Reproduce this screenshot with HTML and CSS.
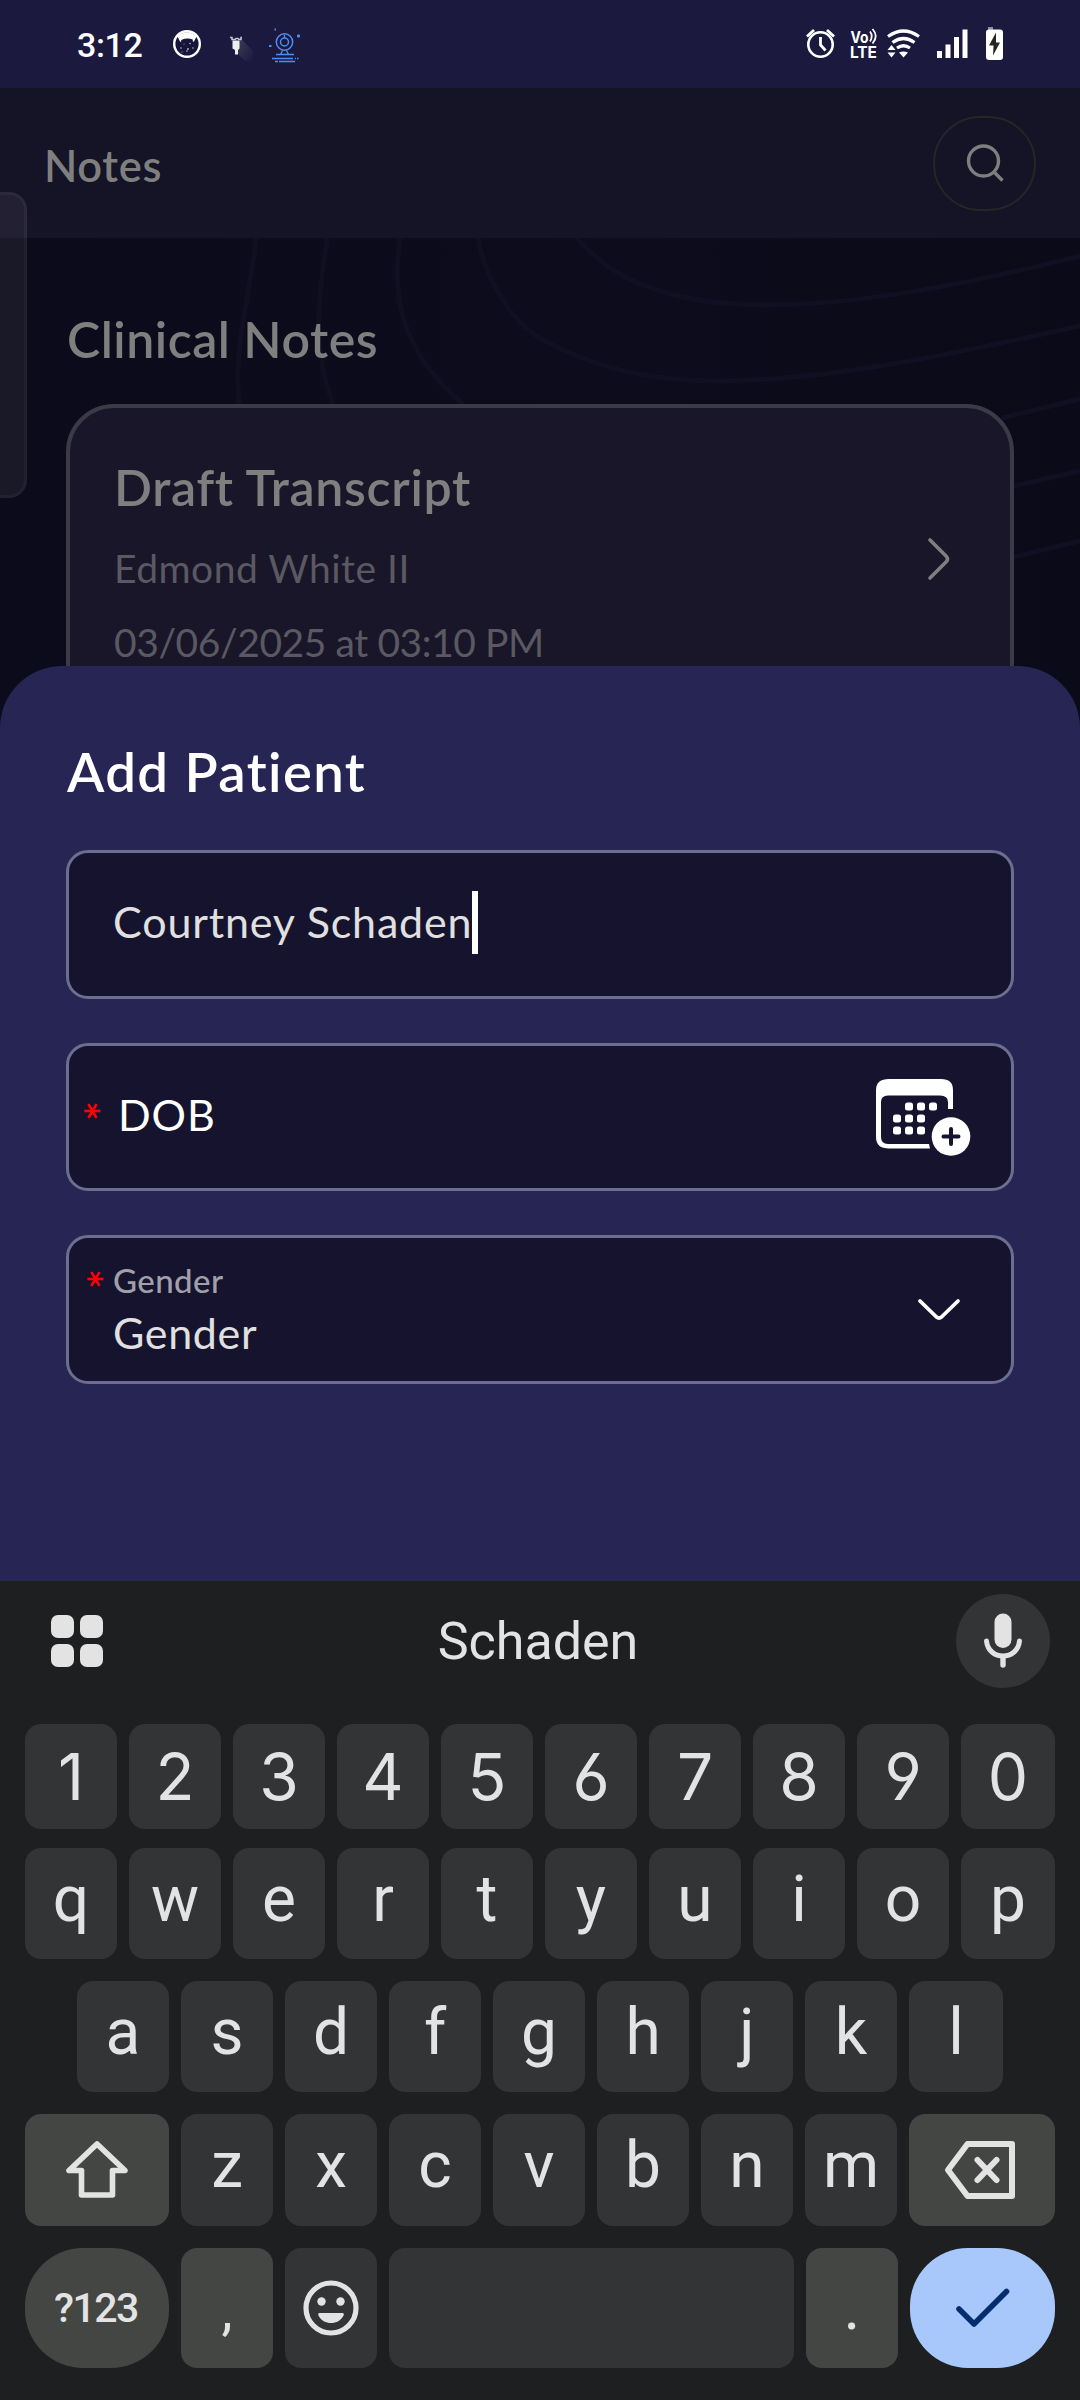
FILE: index.html
```html
<!DOCTYPE html>
<html lang="en">
<head>
<meta charset="utf-8">
<title>Notes</title>
<link rel="stylesheet" href="styles.css">
</head>
<body>
<div class="phone">
  <div class="status">
    <div class="status-left">
      <span class="clock">3:12</span>
      <svg class="ic-cat" width="30" height="30" viewBox="0 0 30 30">
        <circle cx="15" cy="15" r="12.8" fill="#17163a" stroke="#fff" stroke-width="2.4"/>
        <path d="M5.5 7.5A12.8 12.8 0 0 1 24.5 7.5L22 12.5Q20.5 13.5 20.8 10.5Q15 8.500 9.200 11Q9.500 13.500 8 12.500Z" fill="#fff"/>
        <g fill="#b9b9cc"><circle cx="9" cy="19" r=".8"/><circle cx="15" cy="22" r=".8"/><circle cx="21" cy="19" r=".8"/><circle cx="18" cy="14.500" r=".8"/><circle cx="16" cy="20" r=".9"/><circle cx="12" cy="15" r=".5"/><circle cx="10" cy="23" r=".6"/></g>
      </svg>
      <svg class="ic-moto" width="24" height="30" viewBox="0 0 24 30">
        <defs><linearGradient id="shade" x1="0" y1="0" x2="1" y2="1"><stop offset="0" stop-color="#fff" stop-opacity=".16"/><stop offset="1" stop-color="#fff" stop-opacity="0"/></linearGradient></defs>
        <path d="M12 8L24 20V30H16L6 20Z" fill="url(#shade)"/>
        <path d="M1 6.500h2v2h3l1-1h2l1 1h2v-2h1" fill="none" stroke="#c8c8d4" stroke-width="1.500"/>
        <path d="M3.500 9.500h7v8L9 19v4.500H6V19l-2.500-1.500Z" fill="#eee"/>
      </svg>
      <svg class="ic-cam" width="34" height="36" viewBox="0 0 34 36" fill="none" stroke="#4a8ff5">
        <circle cx="16.500" cy="15" r="8.200" stroke-width="1.500"/><circle cx="16.500" cy="15" r="4" stroke-width="1.500"/>
        <path d="M14.500 23.500l-2 4M18.500 23.500l2 4M8 27.500h18M4 31.500h21M27 31.500h1M29 31.500h1.500M7 34.500h3M11 34.500h16M16.500 8v2.500" stroke-width="1.300"/>
        <path d="M29 9h3M30.500 7.500v3M1 19h2.500M6.500 2.500h1.500" stroke-width="2"/>
      </svg>
    </div>
    <svg width="224" height="60" viewBox="0 0 224 60" fill="none" stroke="#fff">
      <circle cx="24.500" cy="28.500" r="12.200" stroke-width="2.600"/>
      <path d="M11 20.500l7-6.500M31 14l7 6.500" stroke-width="2.800"/>
      <path d="M24.500 21v8l5 5.500" stroke-width="2.800"/>
      <text class="volte" x="54.500" y="26.500" textLength="18" lengthAdjust="spacingAndGlyphs" font-size="16">Vo</text>
      <text class="volte" x="54" y="41.500" textLength="27" lengthAdjust="spacingAndGlyphs" font-size="16.500">LTE</text>
      <path d="M74 15.500q3.500 4.500 0 10M76.500 13q6.500 7 0 14.500" stroke-width="1.800"/>
      <path d="M92 20.500q15.500-11 31 0M96.500 26.500q11-8 22 0M101 32q6.500-4.500 13 0" stroke-width="3.200"/>
      <path d="M103 36.500q4.500-2 9 0l-4.500 5zM91.500 34h8l-4-5zM91.500 36.500h8l-4 5z" fill="#fff" stroke="none"/>
      <path d="M143.500 42v-7M152 42V28.500M160.500 42V21M169 42V13.500" stroke-width="5"/>
      <rect x="192" y="11" width="5" height="4" fill="#8c8c9e" stroke="none"/>
      <rect x="190" y="13.500" width="17" height="30.500" rx="3" fill="#fff" stroke="none"/>
      <path d="M200 16.500l-7 13h4.500l-.5 10 7-13h-4z" fill="#252525" stroke="none"/>
    </svg>
  </div>

  <div class="app">
    <header class="header">
      <h1 class="header-title">Notes</h1>
      <div class="search">
        <svg width="50" height="50" viewBox="0 0 50 50" fill="none" stroke="#7f7f7f" stroke-width="3.400">
          <circle cx="23.500" cy="22" r="15"/><path d="M33.500 32.500l9 9"/>
        </svg>
      </div>
    </header>
    <main class="content">
      <svg class="waves" width="1080" height="500" viewBox="0 238 1080 500" fill="none" stroke="#110f21" stroke-width="5">
        <path d="M256 238C250 300 228 360 243 430M327 238C317 310 312 350 335 410M400 238C392 290 398 350 463 404M478 238C486 280 510 320 540 338C600 372 660 381 720 381C830 380 950 355 1080 326M577 238C620 290 690 305 770 305C860 304 960 286 1080 256M1002 418L1080 399M1010 487L1080 471M1010 558L1080 541"/>
      </svg>
      <h2 class="section-title">Clinical Notes</h2>
      <article class="note">
        <div class="note-text">
          <h3 class="note-title">Draft Transcript</h3>
          <p class="note-line">Edmond White II</p>
          <p class="note-line note-date">03/06/2025 at 03:10 PM</p>
        </div>
        <svg class="note-arrow" width="30" height="50" viewBox="0 0 30 50" fill="none" stroke="#7f7f7f" stroke-width="3.600" stroke-linecap="round" stroke-linejoin="round">
          <path d="M5 6L21.500 22.500Q23.500 25 21.500 27.500L5 44"/>
        </svg>
      </article>
    </main>
    <div class="handle"></div>
  </div>

  <section class="sheet">
    <h2 class="sheet-title">Add Patient</h2>
    <div class="field field-name">
      <span class="value name">Courtney Schaden</span><span class="caret"></span>
    </div>
    <div class="field field-dob">
      <span class="star">*</span>
      <span class="value dob">DOB</span>
      <svg class="calendar" width="100" height="84" viewBox="0 0 100 84">
        <path fill="#fff" fill-rule="evenodd" d="M16 3H68Q80 3 80 14V33H75V26Q75 19.500 67 19.500H15Q8 19.500 8 26V61Q8 68 15 68H56L57 72.500H16Q3 72.500 3 61V14Q3 3 16 3Z"/>
        <g fill="#fff">
          <rect x="32" y="26.500" width="8" height="8" rx="2.500"/><rect x="44" y="26.500" width="8" height="8" rx="2.500"/><rect x="56" y="26.500" width="8" height="8" rx="2.500"/>
          <rect x="20" y="38.500" width="8" height="8" rx="2.500"/><rect x="32" y="38.500" width="8" height="8" rx="2.500"/><rect x="44" y="38.500" width="8" height="8" rx="2.500"/>
          <rect x="20" y="50.500" width="8" height="8" rx="2.500"/><rect x="32" y="50.500" width="8" height="8" rx="2.500"/><rect x="44" y="50.500" width="8" height="8" rx="2.500"/>
          <circle cx="78" cy="60.500" r="19.300"/>
        </g>
        <path d="M70.500 60.500h15M78 53v15" stroke="#15132e" stroke-width="4" stroke-linecap="round"/>
      </svg>
    </div>
    <div class="field field-gender">
      <span class="star">*</span>
      <div class="gender-text">
        <span class="label">Gender</span>
        <span class="value gender">Gender</span>
      </div>
      <svg class="gender-arrow" width="50" height="30" viewBox="0 0 50 30" fill="none" stroke="#fff" stroke-width="3.800" stroke-linecap="round" stroke-linejoin="round">
        <path d="M6 6L22.500 22Q25 24 27.500 22L44 6"/>
      </svg>
    </div>
  </section>

  <section class="keyboard">
    <div class="toolbar">
      <svg class="grid-icon" width="52" height="52" viewBox="0 0 52 52" fill="#e3e3e3">
        <rect width="23" height="23" rx="7"/><rect x="29" width="23" height="23" rx="7"/><rect y="29" width="23" height="23" rx="7"/><rect x="29" y="29" width="23" height="23" rx="7"/>
      </svg>
      <span class="suggestion">Schaden</span>
      <div class="mic">
        <svg width="40" height="60" viewBox="0 0 40 60" fill="none" stroke="#e3e3e3" stroke-linecap="round">
          <path d="M20 11V28.500" stroke-width="17"/><path d="M3.500 30C5.500 50 34.500 50 36.500 30" stroke-width="5"/><path d="M20 46v8" stroke-width="5.400"/>
        </svg>
      </div>
    </div>
    <div class="row row-num"><span class="key">1</span><span class="key">2</span><span class="key">3</span><span class="key">4</span><span class="key">5</span><span class="key">6</span><span class="key">7</span><span class="key">8</span><span class="key">9</span><span class="key">0</span></div>
    <div class="row row-q"><span class="key">q</span><span class="key">w</span><span class="key">e</span><span class="key">r</span><span class="key">t</span><span class="key">y</span><span class="key">u</span><span class="key">i</span><span class="key">o</span><span class="key">p</span></div>
    <div class="row row-a"><span class="key">a</span><span class="key">s</span><span class="key">d</span><span class="key">f</span><span class="key">g</span><span class="key">h</span><span class="key">j</span><span class="key">k</span><span class="key">l</span></div>
    <div class="row row-z">
      <span class="key alt shift">
        <svg width="68" height="68" viewBox="0 0 68 68" fill="none" stroke="#e3e3e3" stroke-width="5.600" stroke-linejoin="round"><path d="M34 8L6 34.500H18.500V59H49.500V34.500H62Z"/></svg>
      </span>
      <span class="key">z</span><span class="key">x</span><span class="key">c</span><span class="key">v</span><span class="key">b</span><span class="key">n</span><span class="key">m</span>
      <span class="key alt back">
        <svg width="76" height="64" viewBox="0 0 76 64" fill="none" stroke="#e3e3e3" stroke-width="6" stroke-linejoin="round" stroke-linecap="round"><path d="M25.500 6H70V58H25.500L6 32ZM35.500 22L54.500 42M54.500 22L35.500 42"/></svg>
      </span>
    </div>
    <div class="row row-space">
      <span class="key alt symbols">?123</span>
      <span class="key alt comma">,</span>
      <span class="key emoji">
        <svg width="60" height="60" viewBox="0 0 60 60" fill="#e3e3e3"><circle cx="30" cy="30" r="25" fill="none" stroke="#e3e3e3" stroke-width="5.200"/><circle cx="20.500" cy="23.500" r="4.200"/><circle cx="39.500" cy="23.500" r="4.200"/><path d="M18.500 35H41.500Q43.500 35 42.500 37.500C38 47.500 22 47.500 17.500 37.500Q16.500 35 18.500 35Z"/></svg>
      </span>
      <span class="key space"></span>
      <span class="key alt period">.</span>
      <span class="key enter">
        <svg width="64" height="50" viewBox="0 0 64 50" fill="none" stroke="#062e6f" stroke-width="5.600" stroke-linejoin="round" stroke-linecap="round"><path d="M8 26L23 41L55.500 8.500"/></svg>
      </span>
    </div>
  </section>
</div>
</body>
</html>
```
FILE: styles.css
```css
* { box-sizing: border-box; }
body { margin: 0; background: #1e1f21; }
h1, h2, h3, p { margin: 0; font-weight: 600; }
svg { display: block; flex: none; }

.phone {
  width: 1080px;
  height: 2400px;
  display: flex;
  flex-direction: column;
  overflow: hidden;
  font-family: Lato, "Noto Sans", sans-serif;
  color: #fff;
}

/* Status bar */
.status {
  flex: none;
  height: 88px;
  padding: 16px 60px 0 77px;
  display: flex;
  justify-content: space-between;
  background: #1b1a3e;
}
.status-left { display: flex; height: 58px; align-items: center; }
.clock {
  width: 95px;
  font: 500 34px/60px Roboto, sans-serif;
  letter-spacing: -.4px;
}
.ic-cat { margin-top: -2px; }
.ic-moto { margin: 2px 0 0 27px; }
.ic-cam { margin: 0 0 0 15px; }
.volte { font-family: Inter, sans-serif; font-weight: 700; fill: #fff; stroke: none; }

/* Notes page behind the sheet */
.app { position: relative; flex: none; height: 638px; overflow: hidden; }
.header {
  height: 150px;
  padding: 1px 44px 0;
  display: flex;
  align-items: center;
  justify-content: space-between;
  background: #151326;
}
.header-title { padding-top: 3px; font-size: 43.500px; letter-spacing: .6px; color: #7f7f7f; }
.search {
  width: 103px;
  height: 95px;
  display: flex;
  align-items: center;
  justify-content: center;
  border: 2px solid #252626;
  border-radius: 48px;
}
.content {
  position: relative;
  height: 488px;
  padding: 71px 66px 0;
  background: linear-gradient(90deg, #0c0b1b, #0d0c1c 60%, #0b0a18);
}
.waves { position: absolute; left: 0; top: 0; }
.section-title {
  position: relative;
  padding-left: 1px;
  font-size: 50px;
  line-height: 60px;
  letter-spacing: .5px;
  color: #7f7f7f;
}
.note {
  position: relative;
  height: 360px;
  margin-top: 35px;
  padding: 49px 55px 0 44px;
  display: flex;
  justify-content: space-between;
  background: #191629;
  border: 4px solid #3b3b48;
  border-radius: 48px;
}
.note-title {
  margin-bottom: 26px;
  font-size: 50px;
  line-height: 60px;
  letter-spacing: .7px;
  color: #7f7f7f;
}
.note-line {
  font-weight: 400;
  font-size: 39px;
  line-height: 50px;
  letter-spacing: .5px;
  color: #5a5962;
}
.note-date { margin-top: 24px; letter-spacing: -.42px; }
.note-arrow { margin-top: 77px; }
.handle {
  position: absolute;
  left: -4px;
  top: 104px;
  width: 31px;
  height: 306px;
  background: rgba(255, 255, 255, .06);
  border: 3px solid rgba(255, 255, 255, .04);
  border-radius: 0 18px 18px 0;
}

/* Bottom sheet */
.sheet {
  position: relative;
  flex: none;
  height: 915px;
  margin-top: -60px;
  padding: 72px 66px 0;
  background: #272553;
  border-radius: 62px 62px 0 0;
}
.sheet-title {
  margin-bottom: 46px;
  padding-left: 1px;
  font-size: 54.500px;
  line-height: 66px;
  letter-spacing: 1.400px;
}
.field {
  height: 149px;
  margin-bottom: 44px;
  display: flex;
  align-items: center;
  background: #15132e;
  border: 3px solid #6c6e8f;
  border-radius: 22px;
}
.value { font-size: 43px; line-height: 50px; }
.field-name { padding: 0 0 4px 44px; }
.name { padding-bottom: 1px; color: #e0e0e0; letter-spacing: .85px; }
.caret { width: 6px; height: 63px; background: #fff; }
.field-dob { height: 148px; padding: 0 38px 0 9px; }
.star {
  width: 30px;
  height: 30px;
  overflow: visible;
  font-size: 48px;
  font-weight: 600;
  line-height: 51px;
  text-align: center;
  color: #f00;
  transform: rotate(90deg);
}
.field-dob .star { margin-bottom: 13px; }
.dob { margin: 0 auto 4px 10px; letter-spacing: .9px; }
.calendar { margin-top: 2px; }
.field-gender { align-items: flex-start; padding: 22px 47px 0 12px; }
.field-gender .star { margin-top: 4px; }
.gender-text { display: flex; flex-direction: column; gap: 8px; margin: 0 auto 0 2px; }
.label { font-size: 33px; line-height: 40px; font-weight: 500; letter-spacing: .43px; color: #a0a0aa; }
.gender { color: #e0e0e0; letter-spacing: .67px; }
.gender-arrow { margin-top: 35px; }

/* Keyboard */
.keyboard {
  flex: none;
  height: 819px;
  background: #1e1f21;
  color: #e3e3e3;
  font-family: Roboto, sans-serif;
}
.toolbar {
  height: 143px;
  padding: 0 30px 23px 26px;
  display: grid;
  grid-template-columns: 1fr auto 1fr;
  align-items: center;
}
.grid-icon { margin-left: 25px; }
.suggestion { padding-top: 2px; font-size: 52px; line-height: 60px; }
.mic {
  justify-self: end;
  width: 94px;
  height: 94px;
  display: flex;
  align-items: center;
  justify-content: center;
  background: #333436;
  border-radius: 50%;
}
.row { display: flex; gap: 12px; padding: 0 25px; font-size: 64px; line-height: 1; }
.key {
  flex: 0 0 92px;
  display: flex;
  align-items: center;
  justify-content: center;
  padding-bottom: 8px;
  background: #333436;
  border-radius: 16px;
}
.key:last-child { flex-grow: 1; }
.alt { background: #444644; }
.row-num { height: 105px; font-family: Inter, sans-serif; font-feature-settings: "cv03", "cv04"; }
.row-num .key { padding: 0; }
.row-q { height: 111px; margin-top: 19px; }
.row-a { height: 111px; margin-top: 22px; padding: 0 77px; }
.row-z { height: 112px; margin-top: 22px; }
.row-space { height: 120px; margin-top: 22px; }
.row-space .key { padding: 0; }
.row-z .shift { flex-basis: 144px; padding: 0; }
.row-z .back { flex-basis: 146px; padding: 0 4px 0 0; }
.row-space .symbols { flex-basis: 144px; padding-right: 2px; border-radius: 58px; font-size: 41px; font-weight: 500; letter-spacing: -1.500px; }
.row-space .comma { padding-top: 4px; font-size: 56px; }
.row-space .space { flex: 1 1 0; }
.row-space .enter { flex: 0 0 145px; background: #a8c7fa; border-radius: 58px; }
```
